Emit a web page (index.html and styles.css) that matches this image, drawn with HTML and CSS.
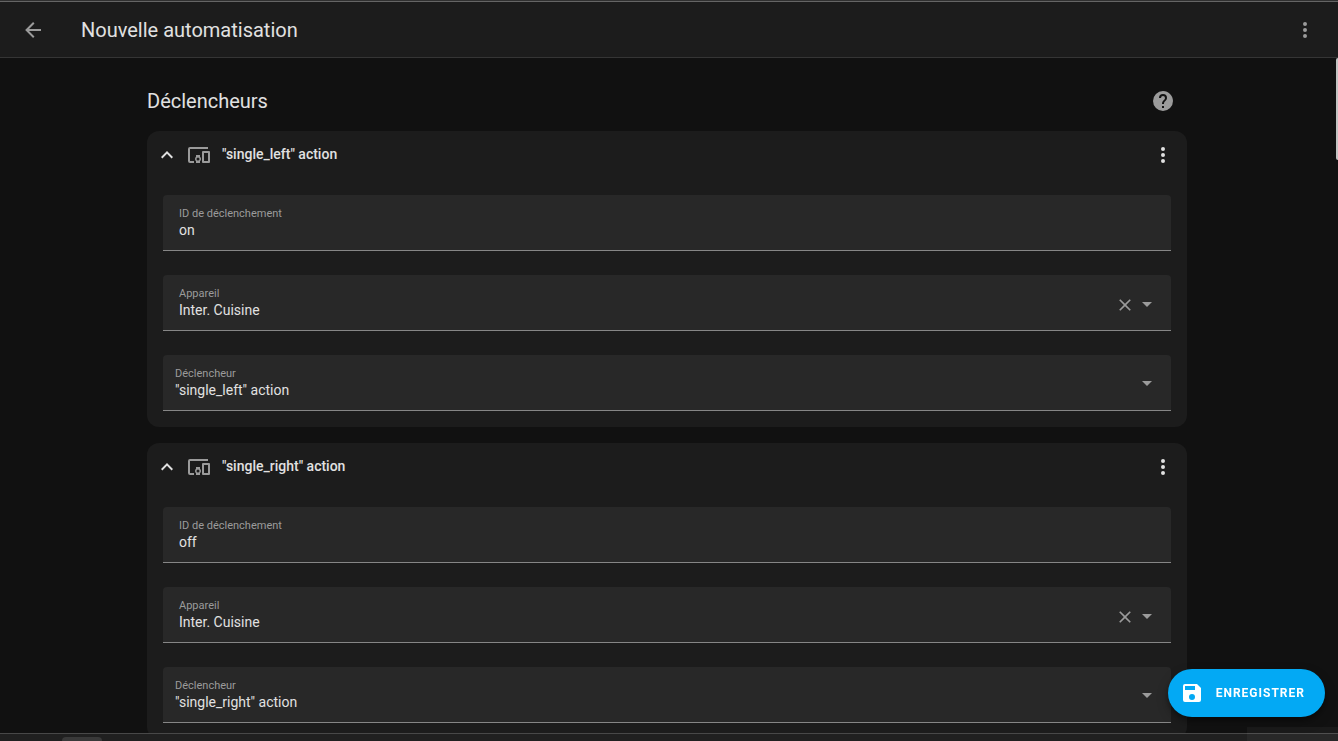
FILE: index.html
```html
<!DOCTYPE html>
<html lang="fr">
<head>
<meta charset="utf-8">
<meta name="viewport" content="width=device-width, initial-scale=1">
<title>Nouvelle automatisation</title>
<link rel="stylesheet" href="styles.css">
</head>
<body>
<svg class="symbols" aria-hidden="true">
  <symbol id="dots" viewBox="0 0 24 24"><path d="M12 16a2 2 0 0 1 2 2 2 2 0 0 1-2 2 2 2 0 0 1-2-2 2 2 0 0 1 2-2m0-6a2 2 0 0 1 2 2 2 2 0 0 1-2 2 2 2 0 0 1-2-2 2 2 0 0 1 2-2m0-6a2 2 0 0 1 2 2 2 2 0 0 1-2 2 2 2 0 0 1-2-2 2 2 0 0 1 2-2Z"/></symbol>
  <symbol id="chevron" viewBox="0 0 24 24"><path d="M7.41 15.41 12 10.83l4.59 4.58L18 14l-6-6-6 6Z"/></symbol>
  <symbol id="devices" viewBox="0 0 24 24"><path d="M3 6h18V4H3a2 2 0 0 0-2 2v12a2 2 0 0 0 2 2h4v-2H3V6m10 6H9v1.78c-.61.55-1 1.33-1 2.22s.39 1.67 1 2.22V20h4v-1.78c.61-.55 1-1.34 1-2.22s-.39-1.67-1-2.22V12m-2 5.5a1.5 1.5 0 1 1 0-3 1.5 1.5 0 0 1 0 3M22 8h-6a1 1 0 0 0-1 1v10a1 1 0 0 0 1 1h6a1 1 0 0 0 1-1V9a1 1 0 0 0-1-1m-1 10h-4v-8h4v8Z"/></symbol>
  <symbol id="close" viewBox="0 0 24 24"><path d="M19 6.41 17.59 5 12 10.59 6.41 5 5 6.41 10.59 12 5 17.59 6.41 19 12 13.41 17.59 19 19 17.59 13.41 12 19 6.41Z"/></symbol>
  <symbol id="arrow-down" viewBox="0 0 24 24"><path d="m7 10 5 5 5-5H7Z"/></symbol>
</svg>

<header class="toolbar">
  <button class="icon-button" type="button" aria-label="Retour">
    <svg class="icon" viewBox="0 0 24 24"><path d="M20 11v2H8l5.5 5.5-1.42 1.42L4.16 12l7.92-7.92L13.5 5.5 8 11h12Z"/></svg>
  </button>
  <h1 class="toolbar-title">Nouvelle automatisation</h1>
  <button class="icon-button" type="button" aria-label="Menu"><svg class="icon"><use href="#dots"/></svg></button>
</header>

<main class="view">
  <div class="content">
    <div class="section-header">
      <h2 class="section-title">Déclencheurs</h2>
      <a class="help" href="#aide" aria-label="En savoir plus sur les déclencheurs">
        <svg class="icon" viewBox="0 0 24 24"><path d="M15.07 11.25l-.9.92C13.45 12.89 13 13.5 13 15h-2v-.5c0-1.11.45-2.11 1.17-2.83l1.24-1.26c.37-.36.59-.86.59-1.41a2 2 0 0 0-2-2 2 2 0 0 0-2 2H8a4 4 0 0 1 4-4 4 4 0 0 1 4 4c0 .88-.36 1.67-.93 2.25M13 19h-2v-2h2M12 2A10 10 0 0 0 2 12a10 10 0 0 0 10 10 10 10 0 0 0 10-10C22 6.47 17.5 2 12 2Z"/></svg>
      </a>
    </div>

    <section class="card">
      <div class="card-header">
        <button class="expander" type="button" aria-expanded="true">
          <svg class="icon icon-bright"><use href="#chevron"/></svg>
          <svg class="icon"><use href="#devices"/></svg>
          <span class="card-title">"single_left" action</span>
        </button>
        <button class="icon-button icon-bright" type="button" aria-label="Options"><svg class="icon"><use href="#dots"/></svg></button>
      </div>
      <div class="card-content">
        <div class="field">
          <div class="field-body">
            <label class="field-label" for="id-1">ID de déclenchement</label>
            <input class="field-value" id="id-1" type="text" value="on">
          </div>
        </div>
        <div class="field">
          <div class="field-body">
            <label class="field-label" for="device-1">Appareil</label>
            <input class="field-value" id="device-1" type="text" role="combobox" aria-expanded="false" value="Inter. Cuisine">
          </div>
          <button class="field-button" type="button" aria-label="Effacer"><svg class="icon-small"><use href="#close"/></svg></button>
          <button class="field-button field-toggle" type="button" aria-label="Ouvrir"><svg class="icon"><use href="#arrow-down"/></svg></button>
        </div>
        <div class="field field-select">
          <div class="field-body">
            <label class="field-label" for="trigger-1">Déclencheur</label>
            <select class="field-value" id="trigger-1"><option>"single_left" action</option><option>"single_right" action</option></select>
          </div>
          <svg class="icon select-arrow"><use href="#arrow-down"/></svg>
        </div>
      </div>
    </section>

    <section class="card">
      <div class="card-header">
        <button class="expander" type="button" aria-expanded="true">
          <svg class="icon icon-bright"><use href="#chevron"/></svg>
          <svg class="icon"><use href="#devices"/></svg>
          <span class="card-title">"single_right" action</span>
        </button>
        <button class="icon-button icon-bright" type="button" aria-label="Options"><svg class="icon"><use href="#dots"/></svg></button>
      </div>
      <div class="card-content">
        <div class="field">
          <div class="field-body">
            <label class="field-label" for="id-2">ID de déclenchement</label>
            <input class="field-value" id="id-2" type="text" value="off">
          </div>
        </div>
        <div class="field">
          <div class="field-body">
            <label class="field-label" for="device-2">Appareil</label>
            <input class="field-value" id="device-2" type="text" role="combobox" aria-expanded="false" value="Inter. Cuisine">
          </div>
          <button class="field-button" type="button" aria-label="Effacer"><svg class="icon-small"><use href="#close"/></svg></button>
          <button class="field-button field-toggle" type="button" aria-label="Ouvrir"><svg class="icon"><use href="#arrow-down"/></svg></button>
        </div>
        <div class="field field-select">
          <div class="field-body">
            <label class="field-label" for="trigger-2">Déclencheur</label>
            <select class="field-value" id="trigger-2"><option>"single_right" action</option><option>"single_left" action</option></select>
          </div>
          <svg class="icon select-arrow"><use href="#arrow-down"/></svg>
        </div>
      </div>
    </section>
  </div>
  <div class="scroll-thumb"></div>
</main>

<button class="save" type="button">
  <svg class="icon" viewBox="0 0 24 24"><path d="M15 9H5V5h10m-3 14a3 3 0 0 1-3-3 3 3 0 0 1 3-3 3 3 0 0 1 3 3 3 3 0 0 1-3 3m5-16H5a2 2 0 0 0-2 2v14a2 2 0 0 0 2 2h14a2 2 0 0 0 2-2V7l-4-4Z"/></svg>
  <span>ENREGISTRER</span>
</button>

<footer class="taskbar">
  <div class="taskbar-tab"></div>
  <div class="taskbar-tray"></div>
</footer>
</body>
</html>
```
FILE: styles.css
```css
* {
  box-sizing: border-box;
}

body {
  display: flex;
  flex-direction: column;
  height: 100vh;
  margin: 0;
  overflow: hidden;
  background: #111111;
  color: #e1e1e1;
  font-family: Roboto, "Noto Sans", sans-serif;
  font-size: 14px;
  border-top: 1px solid #303030;
}

button,
input,
select {
  margin: 0;
  padding: 0;
  border: 0;
  background: none;
  color: inherit;
  font: inherit;
}

.symbols {
  position: absolute;
  width: 0;
  height: 0;
}

.icon {
  display: block;
  flex: none;
  width: 24px;
  height: 24px;
  fill: currentColor;
}

.icon-small {
  display: block;
  width: 20px;
  height: 20px;
  fill: currentColor;
}

.icon-button {
  display: grid;
  flex: none;
  place-items: center;
  width: 48px;
  height: 48px;
  color: #9b9b9b;
}

.icon-button.icon-bright,
.icon-bright {
  color: #e1e1e1;
}

.toolbar {
  display: flex;
  flex: none;
  align-items: center;
  height: 57px;
  padding: 0 9px;
  border-top: 1px solid #656565;
  border-bottom: 1px solid #353535;
  background: #1c1c1c;
}

.toolbar-title {
  flex: 1;
  margin: 0;
  padding-left: 24px;
  font-size: 20px;
  font-weight: 400;
  line-height: 24px;
}

.view {
  position: relative;
  flex: 1;
  min-height: 0;
  padding: 0 4px 0 0;
  overflow: hidden;
}

.content {
  display: flex;
  flex-direction: column;
  gap: 16px;
  max-width: 1040px;
  margin: 0 auto;
  padding-top: 28px;
}

.section-header {
  display: flex;
  align-items: center;
  justify-content: space-between;
  height: 29px;
  padding-right: 12px;
}

.section-title {
  margin: 0;
  font-size: 20px;
  font-weight: 400;
  line-height: 28px;
}

.help {
  color: #9b9b9b;
}

.card {
  border-radius: 12px;
  background: #1c1c1c;
}

.card-header {
  display: flex;
  align-items: center;
  justify-content: space-between;
  height: 48px;
}

.expander {
  display: flex;
  flex: 1;
  align-items: center;
  gap: 8px;
  height: 48px;
  padding-left: 8px;
  color: #9b9b9b;
  text-align: left;
}

.card-title {
  padding-left: 3px;
  padding-bottom: 2px;
  color: #e1e1e1;
  font-weight: 500;
}

.card-content {
  display: flex;
  flex-direction: column;
  gap: 24px;
  padding: 16px;
}

.field {
  display: flex;
  align-items: center;
  height: 56px;
  padding: 0 12px 0 16px;
  border-bottom: 1px solid #868686;
  border-radius: 4px 4px 0 0;
  background: #282828;
  color: #9b9b9b;
}

.field-select {
  padding-left: 12px;
}

.field-body {
  display: flex;
  flex: 1;
  flex-direction: column;
  padding-bottom: 2px;
}

.field-label {
  font-size: 11px;
  line-height: 16px;
}

.field-value {
  width: 100%;
  height: 16px;
  color: #e1e1e1;
  line-height: 16px;
  outline: 0;
}

select.field-value {
  appearance: none;
}

.field-button {
  display: grid;
  place-items: end center;
  width: 20px;
  height: 24px;
}

.field-toggle {
  width: 24px;
  height: 26px;
}

.select-arrow {
  pointer-events: none;
}

.scroll-thumb {
  position: absolute;
  top: 0;
  right: 0;
  width: 2px;
  height: 102px;
  border-radius: 2px 0 0 2px;
  background: #c4c4c4;
}

.save {
  position: fixed;
  z-index: 1;
  right: 13px;
  bottom: 24px;
  display: flex;
  align-items: center;
  gap: 12px;
  height: 48px;
  padding: 0 20px 0 12px;
  border-radius: 24px;
  background: #03a9f4;
  box-shadow: 0 3px 5px rgba(0, 0, 0, 0.3), 0 5px 12px rgba(0, 0, 0, 0.25);
  color: #ffffff;
  font-size: 12px;
  font-weight: 700;
  letter-spacing: 1px;
}

.taskbar {
  position: relative;
  display: flex;
  flex: none;
  justify-content: space-between;
  height: 8px;
  padding-left: 62px;
  border-top: 1px solid #484848;
  background: #202020;
}

.taskbar-tab {
  width: 40px;
  margin-top: 3px;
  border-radius: 4px 4px 0 0;
  background: #393939;
}

.taskbar-tray {
  width: 91px;
  margin-top: -7px;
  background: rgba(255, 255, 255, 0.04);
}
```
